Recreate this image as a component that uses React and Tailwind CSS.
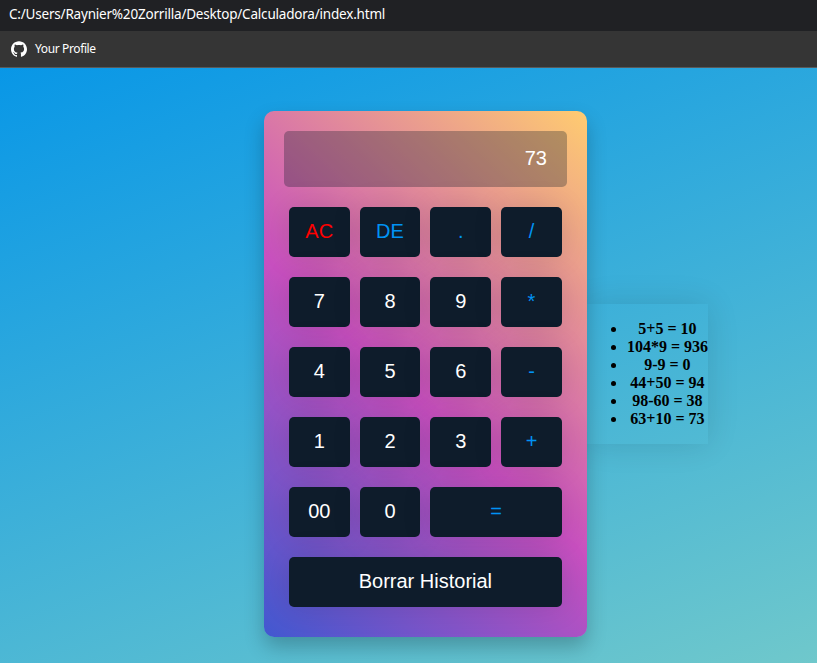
import React from 'react';
import { SiGithub } from 'react-icons/si';

const KEYS = [
  ['AC', 'text-[#ff0000]'],
  ['DE', 'text-[#0093f5]'],
  ['.', 'text-[#0093f5]'],
  ['/', 'text-[#0093f5]'],
  ['7', 'text-white'],
  ['8', 'text-white'],
  ['9', 'text-white'],
  ['*', 'text-[#0093f5]'],
  ['4', 'text-white'],
  ['5', 'text-white'],
  ['6', 'text-white'],
  ['-', 'text-[#0093f5]'],
  ['1', 'text-white'],
  ['2', 'text-white'],
  ['3', 'text-white'],
  ['+', 'text-[#0093f5]'],
  ['00', 'text-white'],
  ['0', 'text-white'],
  ['=', 'text-[#0093f5] col-span-2'],
  ['Borrar Historial', 'text-white col-span-4'],
];

const HISTORY = ['5+5 = 10', '104*9 = 936', '9-9 = 0', '44+50 = 94', '98-60 = 38', '63+10 = 73'];

function BrowserBar() {
  return (
    <header className="font-['Noto_Sans','Open_Sans',sans-serif] text-white">
      <div className="flex h-[31px] items-center bg-[#202124] pb-[2px] pl-[9px]">
        <span className="whitespace-nowrap text-[13.5px] tracking-[-0.2px]">
          C:/Users/Raynier%20Zorrilla/Desktop/Calculadora/index.html
        </span>
      </div>
      <div className="flex h-[37px] items-center border-b border-[#5a5a5a] bg-[#353535] pl-[11px]">
        <SiGithub className="size-4" />
        <span className="ml-2 whitespace-nowrap text-xs tracking-[-0.38px]">Your Profile</span>
      </div>
    </header>
  );
}

function Calculator() {
  return (
    <section className="relative h-[526px] w-[323px] shrink-0 rounded-[10px] bg-[linear-gradient(43deg,#4158D0_0%,#C850C0_46%,#FFCC70_100%)] p-5 font-['Liberation_Sans',sans-serif] text-[20px] shadow-[0_10px_20px_rgba(0,0,0,0.23)]">
      <div className="flex h-14 items-center justify-end rounded-[5px] bg-[#0e1a28]/30 px-5 pb-[2px] text-white">
        73
      </div>
      <div className="mt-5 grid grid-cols-4 gap-x-[10px] gap-y-5 px-[5px]">
        {KEYS.map(([label, tone]) => (
          <button
            key={label}
            className={`h-[50px] rounded-[5px] bg-[#0e1c2b] pb-[2px] shadow-[0_0_30px_rgba(0,0,0,0.12)] ${tone}`}
          >
            {label}
          </button>
        ))}
      </div>
    </section>
  );
}

function History() {
  return (
    <ul className="w-[121px] shrink-0 list-disc py-4 pl-10 text-center font-['Liberation_Serif',serif] text-base leading-[18px] font-bold text-black shadow-[0_0_30px_rgba(0,0,0,0.12)]">
      {HISTORY.map((entry) => (
        <li key={entry} className="whitespace-nowrap">
          {entry}
        </li>
      ))}
    </ul>
  );
}

export default function App() {
  return (
    <div className="h-[663px] w-[817px] overflow-hidden">
      <BrowserBar />
      <main className="flex h-[612px] w-[971.8px] items-center justify-center bg-[linear-gradient(160deg,#0093E9_0%,#80D0C7_100%)] bg-[length:1366px_612px] bg-[position:-197px_0px]">
        <Calculator />
        <History />
      </main>
    </div>
  );
}
